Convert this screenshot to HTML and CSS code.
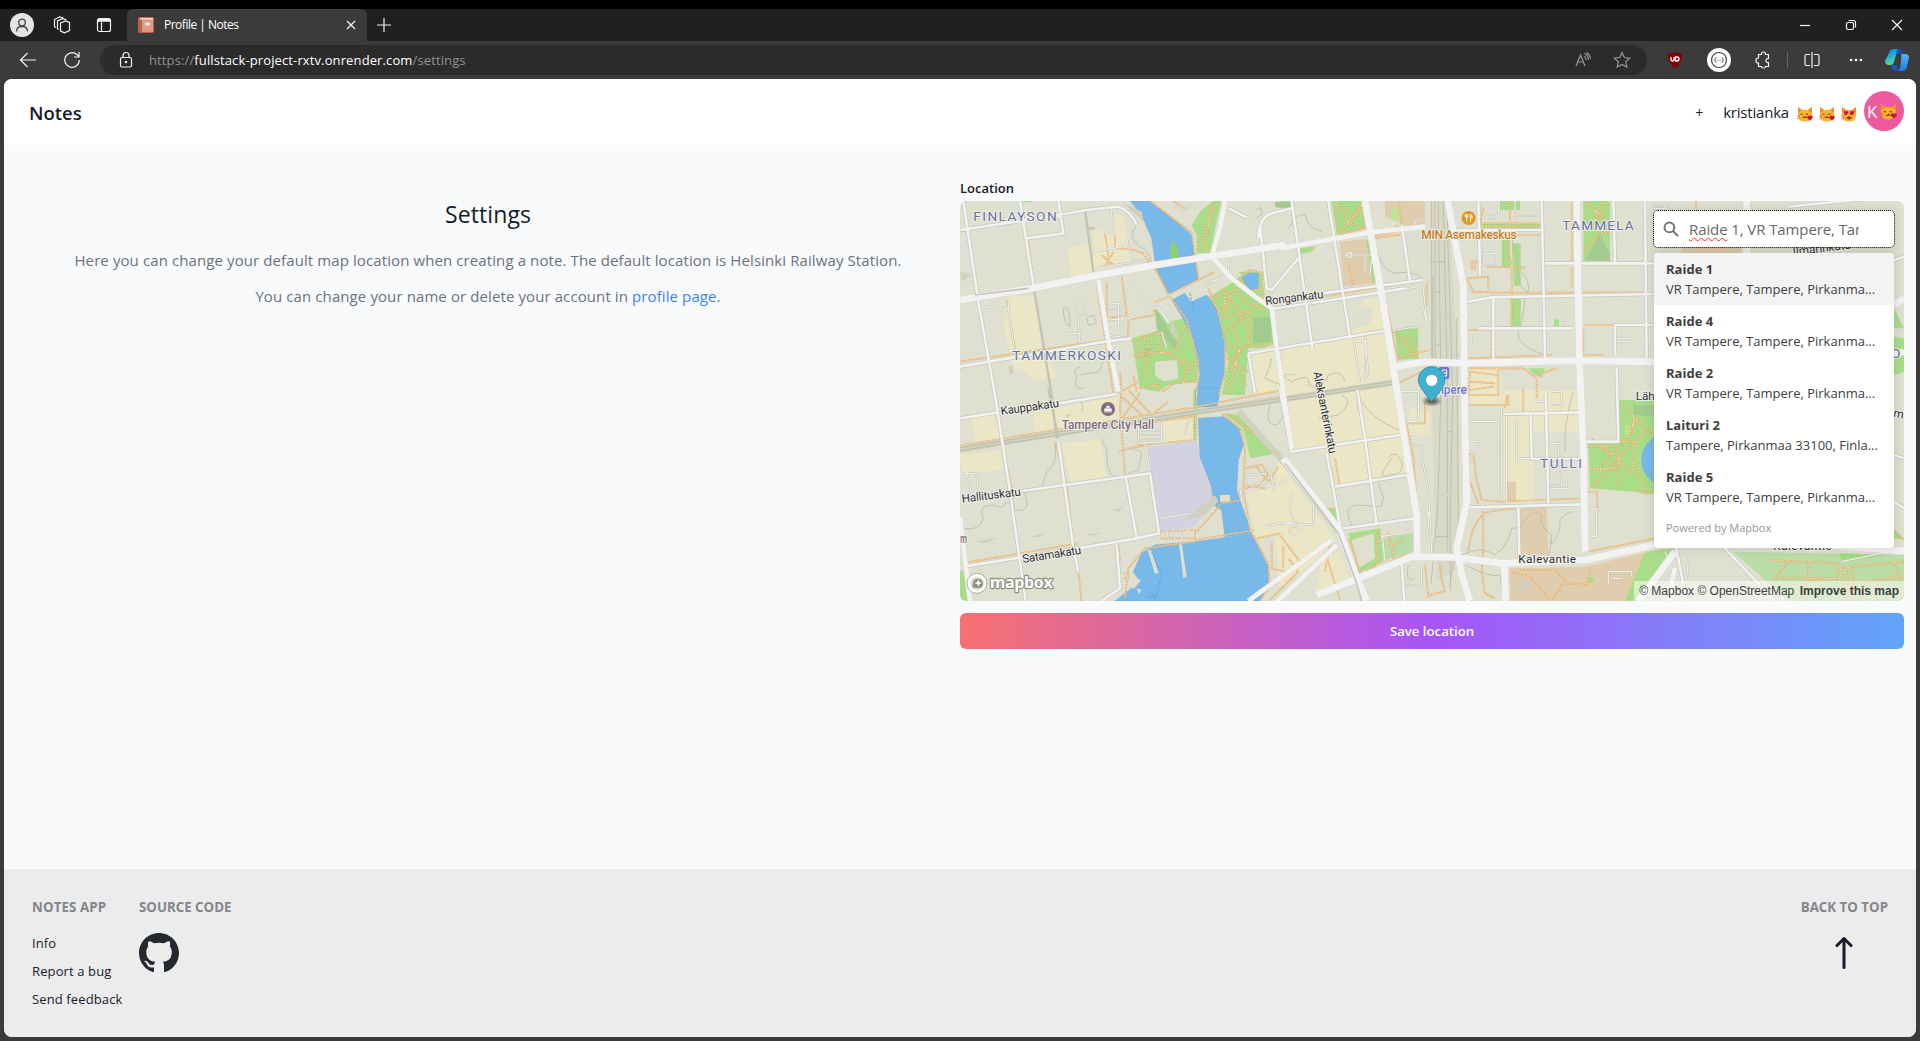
FILE: index.html
```html
<!DOCTYPE html>
<html lang="en">
<head>
<meta charset="utf-8">
<title>Profile | Notes</title>
<link rel="stylesheet" href="styles.css">
</head>
<body>
<svg class="defs" width="0" height="0" aria-hidden="true">
  <defs>
    <symbol id="cat" viewBox="0 0 16 16">
      <path d="M1 1l4 3h6l4-3v8.500q0 6-7 6t-7-6z" fill="#ffb02e"/>
      <path d="M1 1l4 3-4 3zM15 1l-4 3 4 3z" fill="#f58a25"/>
      <path d="M3.500 8.500q1-1 2 0M9 8.500q1-1 2 0M5.500 11.200q1.200 1 2.400 0q1.200 1 2.400 0M8 10v1.500" fill="none" stroke="#5d3a20" stroke-width="1"/>
      <path d="M0 10l3 .5M0 13l3-.8" stroke="#c96a12" stroke-width=".7"/>
    </symbol>
    <symbol id="heart" viewBox="0 0 10 10"><path d="M5 9.500L1 5.400Q-.4 2.600 2 1.200 4 .4 5 2.400 6 .4 8 1.200 10.400 2.600 9 5.400z" fill="#d0103c"/></symbol>
  </defs>
</svg>

<div class="tabstrip">
  <span class="profile"><svg width="14" height="14" viewBox="0 0 14 14"><circle cx="7" cy="4.500" r="3.300"/><path d="M1.500 13.500q0-5 5.500-5t5.500 5"/></svg></span>
  <svg class="chrome-icon workspaces" width="18" height="18" viewBox="0 0 18 18"><path d="M7.500 7l5-2 4 1.500v8l-5 2.300-4-1.800zM5.500 13.500L4.500 13V5l5-2.400 4 1.200M3 11.500l-1.500-.8V3.500l5-2.500 4 1"/></svg>
  <svg class="chrome-icon tabsmenu" width="16" height="16" viewBox="0 0 16 16"><rect x="1.500" y="1.500" width="13" height="13" rx="2"/><path d="M5.500 5v9" /><path d="M2 3.300h12" stroke-width="3"/></svg>
  <div class="tab">
    <svg width="16" height="16" viewBox="0 0 16 16"><rect width="16" height="16" rx="2" fill="#bf624b"/><path d="M4 1h11v14H4z" fill="#dc9b80"/><path d="M2 1h13v1.500H2z" fill="#e4dcd8"/><path d="M7 5.500h5v3H7z" fill="#eee5e1"/></svg>
    <span class="tab-title">Profile | Notes</span>
    <svg class="chrome-icon" width="10" height="10" viewBox="0 0 10 10"><path d="M1 1l8 8M9 1L1 9"/></svg>
  </div>
  <svg class="chrome-icon newtab" width="16" height="16" viewBox="0 0 16 16"><path d="M8 1v14M1 8h14"/></svg>
  <div class="window-buttons">
    <svg class="chrome-icon" width="12" height="12" viewBox="0 0 12 12"><path d="M1 6.500h10"/></svg>
    <svg class="chrome-icon" width="12" height="12" viewBox="0 0 12 12"><rect x="1.500" y="3.500" width="7" height="7" rx="1.500"/><path d="M3.500 1.500h5q2 0 2 2v5"/></svg>
    <svg class="chrome-icon" width="12" height="12" viewBox="0 0 12 12"><path d="M1 1l10 10M11 1L1 11"/></svg>
  </div>
</div>

<div class="toolbar">
  <svg class="chrome-icon back" width="18" height="16" viewBox="0 0 18 16"><path d="M17 8H1.500M8.500 1L1.500 8l7 7"/></svg>
  <svg class="chrome-icon reload" width="18" height="18" viewBox="0 0 18 18"><path d="M16.300 9A7.300 7.300 0 1 1 13.800 3.500L16 5.500M16 1v5h-5"/></svg>
  <div class="address">
    <svg class="chrome-icon" width="14" height="18" viewBox="0 0 14 18"><rect x="1.500" y="6.500" width="11" height="9.500" rx="1.500"/><path d="M4 6.500V4.500q0-3 3-3t3 3v2"/><circle cx="7" cy="11" r=".7" fill="#fff"/></svg>
    <span class="url">https://<b>fullstack-project-rxtv.onrender.com</b>/settings</span>
    <svg class="chrome-icon muted" width="16" height="16" viewBox="0 0 16 16"><path d="M1 14L5.500 3 10 14M2.800 10h5.500M9 4q2 1 2 4M9.500 1.500q4 1.800 3.800 6.500M11.500.5q4 2.500 3.800 6.500"/></svg>
    <svg class="chrome-icon muted star" width="18" height="18" viewBox="0 0 18 18"><path d="M9 1.500l2.300 5 5.400.6-4 3.700 1.100 5.400L9 13.500l-4.800 2.700 1.100-5.400-4-3.700 5.400-.6z"/></svg>
  </div>
  <svg class="ublock" width="16" height="16" viewBox="0 0 16 16"><path d="M8 0q3 1.500 7 1.500Q15.500 12 8 16 .5 12 1 1.500 5 1.500 8 0z" fill="#800000"/><path d="M4 5v2.500q0 1.500 1.500 1.500T7 7.500V5M8.500 5v4h1.500q2 0 2-2t-2-2z" fill="none" stroke="#fff" stroke-width="1.300"/></svg>
  <svg class="json" width="24" height="24" viewBox="0 0 24 24"><circle cx="12" cy="12" r="12" fill="#fff"/><circle cx="12" cy="12" r="7.500" fill="none" stroke="#444" stroke-width="1.200"/><path d="M9.500 9.500q-1.500 0-1.200 1.200Q8.500 12 7.500 12q1 0 .8 1.300-.3 1.200 1.200 1.200M14.500 9.500q1.500 0 1.200 1.200-.2 1.300.8 1.300-1 0-.8 1.300.3 1.200-1.200 1.200M10.200 12.300h.8M11.700 12.300h.8M13.200 12.300h.8" fill="none" stroke="#555" stroke-width=".9"/></svg>
  <svg class="chrome-icon puzzle" width="16" height="18" viewBox="0 0 16 18"><path d="M3.500 3.500h3q-.3-2.500 2-2.500t2 2.500h3v4q-2.500-.3-2.500 2t2.500 2v4h-3q.2 1.500-2 1.500t-2-1.500h-3v-3.500Q1 12.200 1 9.500T3.500 7z"/></svg>
  <i class="divider"></i>
  <svg class="chrome-icon split" width="16" height="16" viewBox="0 0 16 16"><path d="M6 2.500H2.500q-1.500 0-1.500 1.500v8q0 1.500 1.500 1.500H6M10 2.500h3.500Q15 2.500 15 4v8q0 1.500-1.500 1.500H10M8 0v16"/></svg>
  <svg class="more" width="14" height="4" viewBox="0 0 14 4" fill="#fff"><circle cx="2" cy="2" r="1.300"/><circle cx="7" cy="2" r="1.300"/><circle cx="12" cy="2" r="1.300"/></svg>
  <svg class="copilot" width="24" height="24" viewBox="0 0 24 24">
    <defs><linearGradient id="cp1" x2=".3" y2="1"><stop stop-color="#1686d8"/><stop offset=".55" stop-color="#20b6cf"/><stop offset="1" stop-color="#5ddc90"/></linearGradient><linearGradient id="cp2" x2="0" y2="1"><stop stop-color="#54b5ee"/><stop offset="1" stop-color="#2176e8"/></linearGradient></defs>
    <path d="M16.500 6H20q4 0 4 4l-2 9q-1 4-5 4h-6q4-1 4.500-5z" fill="url(#cp2)"/><path d="M6 17h6.500l-1 6Q8 23 7 20z" fill="#1a55cf"/>
    <path d="M4 5q1-4 5-4h6q-3 1-4 6l-2 7q-1 3-4 3H4q-4 0-4-4z" fill="url(#cp1)"/><path d="M12.500 1H15q2 0 3 5h-4q-2 0-3 3 0-6 1.500-8z" fill="#0e51b5"/>
  </svg>
</div>

<div class="page">
  <header class="header">
    <a class="brand">Notes</a>
    <div class="account">
      <span class="plus">+</span>
      <span class="username">kristianka</span>
      <span class="cats">
        <svg width="16" height="16" viewBox="0 0 16 16"><use href="#cat"/><use href="#heart" x="10" y="9" width="6" height="6"/></svg>
        <svg width="16" height="16" viewBox="0 0 16 16"><use href="#cat"/><use href="#heart" x="10" y="9" width="6" height="6"/></svg>
        <svg width="16" height="16" viewBox="0 0 16 16"><use href="#cat"/><use href="#heart" x="2.500" y="4.500" width="5" height="5"/><use href="#heart" x="8.500" y="4.500" width="5" height="5"/><path d="M5 11.500h6q-3 4-6 0z" fill="#d0103c"/></svg>
      </span>
      <span class="avatar">K<svg width="17" height="17" viewBox="0 0 16 16"><use href="#cat"/><use href="#heart" x="10" y="9" width="6" height="6"/></svg></span>
    </div>
  </header>

  <main class="main">
    <section class="intro">
      <h1>Settings</h1>
      <p class="p1">Here you can change your default map location when creating a note. The default location is Helsinki Railway Station.</p>
      <p class="p2">You can change your name or delete your account in <a>profile page.</a></p>
    </section>

    <section class="location">
      <label>Location</label>
      <div class="map">
        <svg class="map-canvas" width="944" height="400" viewBox="15 78 2832 1200">
          <rect x="15" y="78" width="2832" height="1200" fill="#dfe0d0"/>
          <g fill="#ebe6c6">
            <path d="M337 215l68-10 10 100-67 3zM415 160l65 25v-65h25l22 145-112 25zM165 365h75l25 140 40 105-65 5-40-30-25-5-30-130zM50 725l70-5 15 75-75 5zM235 710l255-45 10 85-260 30zM15 840l120-15 10 60-125 10zM320 805l115-10 20 112-110 18zM620 740l90-15 5 70-85 10zM890 540l70-10 25 120-90 5z"/>
            <path d="M875 955l90-20v-85l175 240-60 70-105 80-15-160-55 15zM985 520l210-45v-25l30-75 45-10 20 105 25 170 40 260-205 35-30-105h-110l-35-190zM1645 645h225v125h-135v215h-90zM1545 580h90l5 80 60 40-155-15zM1355 780h70v-70l-60-10zM1100 1150l50-20 40 90-110 40z"/>
          </g>
          <g fill="#dfcdae"><path d="M1290 78h120v72l-70 5-10-15-40-15zM1155 200l80-8 27 133-97 10zM1695 1000l80-5 5 145h-85zM1665 1180l225-5 190-45-60 148h-355zM1655 920h28v58h-28zM2180 180h180v65h-180z"/></g>
          <g fill="#a9dd8a">
            <path d="M735 110l40-32h25l-15 62-20 95h-40v-55l-15-30zM1130 78h90l12 82-87 18zM530 490l70-20 15-10-15-60 40 40 50-10 40 130-5 60-85 10-30 20-55-10zM755 370l65-40 40-30-10-10h70l10 75-30 5 50 30 10 100-30 20h-50l-10 140h-70l20-100-30-140zM805 715l45 5 115 115-80 15-20-90zM715 645h10v150h-10zM1320 465l70-5v90l-60 5zM1233 195h12l17 125-10 5zM1640 195h25v80h-25zM1670 205h27v128h-20zM1667 370h30v85h-30zM1580 145h175v15h-175zM1635 78h60v27h-60zM1797 405h15v48h-15zM1885 78h80v180h-80zM960 90l50-12h-30zM1035 220l48-6-10 15-35 8zM200 78h30v4h-30z"/>
            <path d="M1900 805h90v-130h107v280h-17l-175-15zM1180 1075l95-15 10 100-75 35zM1105 1005l35-5 5 40zM2010 1278l60-148 90-12-100 160zM2817 400l30 60h-30zM2817 485l30 5v100l-30 10zM2817 1065l30 30-30-5zM15 1190l10-5 13 93H15zM1895 1208h22v16h-22zM1720 580h50l-10 28-25-10z"/>
          </g>
          <path d="M2335 1130l512 10v138h-347zM1285 1090l90-15 3 55-88 25z" fill="#bbdba7"/>
          <path d="M2655 1135l145 5-140 20z" fill="#a1dc81"/>
          <path d="M1190 1095l65-20 5 75-50 30zM600 560l65-5 5 55-45 10-25-20z" fill="#dfe0d0"/>
          <path d="M895 430l50-5 5 75-55 5zM565 520h22v25h-22zM1890 255l45-80 30 65v18zM2035 690h62v32h-62zM600 400l70 110-15 10-50-60zM960 80h50v25l-50-10z" fill="#a3cb8f"/>
          <path d="M1310 98h20v38h-20zM2010 750h15v28h-15z" fill="#bfe591"/>
          <path d="M1340 175l90-10 20 150-80 30zM1790 340l70 10-10 90-70-10zM1205 400l50-5-10 50-55 20z" fill="#dddfcf"/>
          <path d="M578 817l147-22 10 50 35 90 5 55-60 65-100 15z" fill="#d2d2e0"/>
          <g fill="#79b9ea" stroke="#70a8db" stroke-width="1.500">
            <path d="M525 78h60l55 42 70 60 8 60 12 75-90 45-35-70-15-100-30-70zM650 375l40-20 20 25 45-20 35 50 22 90-4 90-22 105h-66l15-100-20-100-25-55z"/>
            <path d="M730 730l75-5 45 30 15 55-15 45-5 90 15 45 30 85-80 10-10-80-25-15-5-55-35-90zM560 1135l40-25 120-10 170-23 50 98v50l-25 53H480l75-58-20-30z"/>
            <path d="M860 310l20-15h30v45l-25 5zM722 640h70l-12 52-58 5z"/><circle cx="2140" cy="855" r="80"/>
          </g>
          <path d="M655 193l14 30v30l-20 7-5-30z" fill="#91d070"/>
          <path d="M690 355l45-20 10 20-35 25zM795 960h30v20h-30zM578 1125l10-4 22 72-10 4zM672 1106l8-2 15 102-10 3zM530 1195l28 22-25 28zM545 1240l15 5-8 12z" fill="#dfe0d0"/>
          <path d="M585 1120l22 50 14 25-18 75M575 1268l35-10M590 1255l12 22M705 355l14 60" stroke="#5aa0e6" stroke-width="3" fill="none" stroke-dasharray="8 4"/>

          <!-- contours -->
          <g fill="none" stroke="#bcbcac" stroke-width="2.500">
            <path d="M545 150q-30 40 5 60t40 50M375 575q-25 10-10 30l-5 25q15 20 30 5M375 600l55-10 15-30M25 1060q50 10 60-30-20-40 30-40 30 15 35-5 20-10 30 20 50 10 30-50l30-10M380 710q10-20-10-40M300 800q10 70-25 90l-12 40M450 790q-20 10 5 30 0 60 10 70 0 20 45 15M490 830q50-20 70 5l-10 50-30 10M945 690q-20 60 20 60 40-40 15-60M1260 210q20 80 60 85 60-10 80 15M1000 160q30-50 50-40 10 40 50 50M1020 600q-60-10-10 20 60-30 50 10 40 20 60-30 40-20 50 20M1290 430q20 60 40 40M1160 660q40 20-10 60l-60 10M1220 680q30 50 110 85M1310 850q-50 70-10 50 50 0 40-40-20-40-40-10M1190 1050q-30-60 20-60l70 5 5-30-15-40M1520 1140q60-30 100 0 40-30 50-80 20 0 25-10M1700 1050q40-60 60-30-10 30 30 60-10 60 25-20-10-40 40-50M1780 1150l10-60M1710 370q-10 90-20 100-10 40 80 70M1665 160q10 60 20 80 0 110 35 110M1855 650q-30 100-25 180M900 110q20-30 20 10l-20 10M325 400q20-15 20 55-20-5-20-55M395 430l20-10 10 25-25 5zM1700 290q25 30 20 60M950 550q-5 30-20 60l50 20M1530 1170q80 40 105 30l10 70M1360 1170q-10 60 20 40"/>
          </g>
          <g fill="#cfd0bf"><path d="M160 575l15-5v25l-12 5zM395 1078l45-5-30 10zM470 1005l35-8-15 12zM60 1100l65-12-30 16zM225 1085l55-13-30 15zM500 80l60 30 20 90-15-60zM650 430l25 70-30-30zM15 290l35 10-30 20zM720 1010l60-50 10 20-40 40-70 15zM1680 1230l50-15v15l-40 10zM330 720l25-5-20 15z"/></g>

          <!-- railway yard -->
          <path d="M1425 78h55l30 500 5 600-70 40-15-540z" fill="#d8d9c8"/>
          <g fill="none" stroke="#bfc0ac" stroke-width="3"><path d="M1430 78v500l5 80M1440 78v560M1450 78l8 570-10 350-20 230M1465 78l12 560v490M1475 78l18 570-8 420 2 180M1433 300v300M1505 430l5 620-25 180M1425 260h48M1440 350h14M1470 420h14M1440 510h14M1478 770h14M1440 1085h40"/></g>

          <!-- footpaths: orange edge with a pale dashed core -->
          <g class="path-edge"><use href="#footpaths"/></g>
          <g class="path-core">
            <g id="footpaths">
              <path d="M585 78l125 95 10 70 12 72-92 45M655 78l40 25M785 85l-60 140M770 78l-20 155M560 230l25 30 20 30 40 75 50 70 35 125-5 100M640 360l90-45 50-25M640 365l-40 15M590 265l-170 30M220 195l15 130M155 375l25 150M15 560l440-65M425 325l50 330M455 320v110M500 305l15 110M450 175l15 100M480 180v40l60 5 30 15 10 25M440 240l35 30M475 230l-25 45M465 428l55-8M520 430v60M520 435l75-15 5-20"/>
              <path d="M530 500l80-30 25 50M540 520l30 40M570 490l-5 40 90 5M590 490v30M530 545l55-10-20 75M550 640l60-10 15 20 30-25 70-5M610 500l5 30 40 20 70 20M690 450l-30 80M665 545l30 45 30-20M695 590l-10 35M535 600l10 50M490 655l60-35"/>
              <path d="M760 340l30 70 20 90v100l-20 60M765 370l80-25 20-30M790 415l35-55 60 120M825 360l-10 60-10-80M845 345l30 40 60 20M855 310l30-25 40 10-5 45-40 10-25-20zM795 430l85-20M810 470l60-50M835 440l20 100-30 50M890 400l-10 110-45 30M885 515l70-10M810 550l70 40M830 540l45 90M845 560l-30 100M855 530l-30-20M920 340l5 50"/>
              <path d="M1145 78l5 90M1220 78l10 82-80 20M1140 90l60 40 25-50M1155 175l70-95M1175 140l50 20M1170 95l10 60M1255 185l90-20M1255 190l85-12M1180 270l15 60M1105 365l300-50M1110 375l200-25M1335 85l5 60M1330 150l-20 20M1320 475l70 75M1325 555l30-15 70-15M1345 500q20-30 35 10-10 20-25 5M1415 320v70M1290 375l40 180M1330 625l100-50"/>
              <path d="M1580 145h180M1580 155h175M1665 78v70l-5 10v60l10 60M1585 95l-10 60M1590 275l120 2M1540 310l60-5v40M1535 310l20 40 70 3h450M1560 255v25h-10v-20h20M1540 465h70v90M1670 275v180M1680 180h75M1850 80v260M1890 80l70 60M1960 85l-45 50 25-55M1965 175h-30l-50 55M1920 105l40 60M1885 450h90M1885 460v80h60M1975 78v30M1540 550l250-10M2223 78v25"/>
              <path d="M1540 580h90v80h-90l5-70 80 10M1540 620l80 5M1545 645l70-10M1625 580h80l40 30v60M1745 600l60-20M1540 690h120v-30M1655 660l-5 40M1705 640v70M1555 835l10 80 15 60 60 5 240-10M1545 830l-5 80 30 75M1410 680v65h-50M1355 745l20 100 20 280M1540 1130q10-100 60-120l80-10M1585 1005v120l-5 60 10 70 30 15M1665 1190l60 15 60 70M1690 1185h110l30 30-40 60M1830 1225l70 5 5-50M1897 950h30v60M1905 880h80M1895 815h80M1910 935l80-70"/>
              <path d="M15 830l700-120 260-45M15 812l700-115 260-50M495 590l5 50-5 60 15 200M500 665l60 55M555 655l-65 90M520 645l70 75 50-40M515 820l70-10M550 760v50l170-15M560 745l155-20M725 650l-5 130M145 820l25 120M335 925l20 200M300 800l35 130M800 715l60 50 10 60-5 120 20 120 55 100 5 70-25 35M820 715l75 60 80 60M870 880l50-10 20 30-30 30-45 10M900 870l40 50 30-45M870 930l60 10M900 1065l-180 30M860 975l-60 10-30 35-45 50M720 1100l-150 20-50 60-10 90M505 1195h15v15h-15M20 1165l350-60M370 1190l10 88M490 1110l5 50M610 1070l110-5v35M615 1090h100"/>
              <path d="M905 1090l70-15M975 1080l60 80M950 1100v80l40 10-30 40M985 1110v70M1000 1150l30 40-90 90M1180 1090l40 110 50-35-5-40 10-60M1260 1100h25M1300 1070l20 100M1300 1115l50-20M1115 1145l40 130M1125 1110l-15 80M1410 1165l10 100 30-15M1455 1165l5 50 10 35-50 10M1350 1140l-130 60M1140 850l15 90M1145 1000h-35"/>
              <path d="M2000 680l40 50-20 60-80 80M1990 800h50l-10 100-40-50-80-60M1905 880l50 5 30-30 90-90M1992 830v110M2035 730l60 50M2060 730l-40 30M2035 720v60M2030 860l50 90M1935 820l40 20M2045 940l20 15h30M2440 1155l210 10-5 60M2560 1160v50M2500 1160l-40 50h180M2655 1180l190-20M2660 1180l10 98M2675 1180l10 98M2690 1180l10 98M2700 1225l145-20M2560 1210l-20 68M2640 1210l-80 10M2820 1160l25 118M2730 1220l-10 58M2770 1220l-5 58M2817 1065l30 30M2100 1090l-200 40"/>
            </g>
          </g>

          <!-- service lanes -->
          <g class="lane-edge"><use href="#lanes"/></g>
          <g class="lane-core">
            <g id="lanes">
              <path d="M410 230l100-15M420 280l155-25M470 95v35M520 220q-10-40 20-40M75 410l90-10M160 375v30l20 130M360 375l10 60 5 70M385 375l5 45h-30M335 475h35M455 435l70-5 80-35 35 50M530 325l60 60M545 380l30-20M470 385h20v70M460 405h40l5 65M455 480l70 10M610 395l35 50M620 470l15 50M750 330l50-20M660 95l25 15 35-25M820 250v40l-50 30M880 530l75-15M25 895h40l5 60M35 890l15 70"/>
              <path d="M1165 240h100l-20-50M1230 245v45M1250 250l-5 50M1380 155v-20h20M1300 350l90-15M1320 340v10M1395 340l20 110-90 15M1405 340l10 100M1175 240a8 8 0 1 0 16 0 8 8 0 1 0-16 0M1195 490l20 130M1230 480l10 130M1200 500h30v120M1580 210v65M1620 210v60h-45M1585 235h45M1630 80v40M1595 120h25v12h-25zM1680 78v45h70M1550 500v-15M1590 515h25M1830 460v-30M1840 265a10 8 0 1 0 2-3M1540 740h90M1540 800h30q10 25-30 30M1640 700v260l-10 15M1655 720v260M1630 740v210M1345 650h45v90h-35M1370 810h25l30 170-10 130M1420 970l-20 40M1385 1030l40-20 5 120M1440 960h60M1685 730v140M1740 680h30M1690 850h60M1790 650h30v40h-30M1785 805h25v60h-25M1815 830v100h-30M1785 940h50v-20M1910 1000h15v85h-20M1350 1230h35M1400 1170v70M1075 990v60l-80-5M1015 955q-20 40 0 80M1005 1060a15 12 0 1 0 1-1M1280 1085l95-15M1280 1060l10 100"/>
              <path d="M550 745v60l90-5M560 768h65M560 780h60M560 792h60M620 745v50M700 730l-10 50M615 1030l90-15M635 1065l5 30M655 1065l5 30M675 1062l5 30M695 1060l5 30M570 800l15 90M860 980l-5-40M890 930l50-10M935 1050l90-10M945 880l10 60 40-30M870 900l60-5M1960 1230v-40h70v12M1970 1210h30M2095 90h40v25M2090 100h40l-5-20M1985 490h45M1985 500h30M2160 1130l-50 150M2130 1130l60 148M2200 1150l-10 128M2660 1160l187-40M2817 980l30 15"/>
            </g>
          </g>

          <!-- streets: casing then surface -->
          <g class="casing"><use href="#streets"/></g>
          <g class="casing wide"><use href="#avenues"/></g>
          <g class="rail-street"><path d="M15 822l285-45 420-65 255-38 345-52"/><path d="M850 708l160 180 140 180"/></g>
          <g class="rail-line"><path d="M15 818l285-45 420-65 255-38 345-52M15 827l285-45 420-65 255-38 345-52"/></g>
          <g class="narrow"><path d="M390 105l25 185M235 330l55 330 15 130M280 640l30 150M1207 645l5 60M400 160h20"/></g>
          <g class="surface">
            <g id="streets">
              <path d="M25 78l45 302 50 280 45 290 47 328M195 78l40 252M15 165l235-35 145-25 95-10q35 10 55 55M15 575l435-75 80-10M310 78l15 97-110 15M15 730l115-18M310 685l175-28M310 800l45 320 15 70M20 975l180-27 130-18 255-35 27 180-67 15-175 30-345 55M512 905l33 185M485 1110l10 130-55 38"/>
              <path d="M1010 78l20 142 25 180 17 120M1120 78l65 412M950 402l180-27 145-23 75-12M1100 355l305-40M1340 150l25 168M880 535l405-67M910 190q0-60 40-75l60-15M915 150l20 190 15 5 80-95M820 100l55 27M1570 78l5 222M1505 165h260M1760 78l10 472M1540 380l70-13 487-10M1615 370v185M1570 460h285M1770 265h327M1975 78l5 185M2070 78l5 482M1980 540v-90h117M1985 580l5 220h-100"/>
              <path d="M1645 717l235-5M1727 717l3 135h150M1772 655l8 330M1545 997l340-9M1690 998l3 152M1010 830l325-50M1140 935l215-35M1165 1060l215-30M1207 645l23 145 35 260M1115 835l40 215M975 645l35 185M1340 1165l8 113M880 535l20 120M2300 1110l160 168M2160 1100l35 178M2817 840l30 10M2817 255l30-10M2500 95l300-30M2817 980l30 20"/>
            </g>
            <g id="avenues">
              <path class="w14" d="M430 315l30 185 30 150M15 1025l30 253M1410 155l-165 17-270 48M810 78l-15 82-25 85 60 65 70 55 50 35 15 118 45 302M1130 1095l-250 183M1145 1110l-200 190M2140 1278l20-100"/>
              <path class="w22" d="M15 375l215-35 200-40 170-30 160-25 230-35M985 850l165 210 60 160 25 58M1230 78l50 282 12 70 33 210 20 130 40 250 2 125M1478 78l47 252 3 310 7 345-30 130 15 85 25 78M1085 1260l285-115 130 2 140 18 250-10 207-45M1320 575l90-15 120 5 320-8 247 3M1865 78l8 472 12 280 5 300M1648 1170l4 108M2160 1130l-110 148M2375 78v170M2600 1110l247 18M2817 540l30-10M2817 390l30-20"/>
            </g>
          </g>
          <path d="M990 865l160 210 55 150 15 53M60 360l160-20" fill="none" stroke="#c5c6b6" stroke-width="5"/>

          <!-- labels -->
          <g class="district">
            <text x="55" y="138" textLength="250">FINLAYSON</text>
            <text x="172" y="556" textLength="326">TAMMERKOSKI</text>
            <text x="1822" y="165" textLength="214">TAMMELA</text>
            <text x="1755" y="878" textLength="126">TULLI</text>
            <text x="2808" y="550">O</text>
          </g>
          <g class="street-name">
            <text x="932" y="390" textLength="176" transform="rotate(-7 932 390)">Rongankatu</text>
            <text x="1075" y="592" textLength="250" transform="rotate(79 1075 592)">Aleksanterinkatu</text>
            <text x="139" y="720" textLength="176" transform="rotate(-8 139 720)">Kauppakatu</text>
            <text x="22" y="983" textLength="178" transform="rotate(-7 22 983)">Hallituskatu</text>
            <text x="204" y="1164" textLength="178" transform="rotate(-9 204 1164)">Satamakatu</text>
            <text x="1690" y="1164" textLength="173">Kalevantie</text>
            <text x="2455" y="1124" textLength="175">Kalevantie</text>
            <text x="2042" y="675">Lähde</text>
            <text x="2515" y="242" transform="rotate(-7 2515 242)">Ilmarinkatu</text>
            <text x="2814" y="725" transform="rotate(10 2814 725)">m</text>
          </g>
          <g class="poi">
            <text x="320" y="763" textLength="277" fill="#806a7c">Tampere City Hall</text>
            <text x="16" y="1103" textLength="20" lengthAdjust="spacingAndGlyphs" fill="#806a7c">m</text>
            <text x="1399" y="191" textLength="286" fill="#c47c24">MIN Asemakeskus</text>
            <text x="1398" y="656" textLength="138" fill="#6c78cc">Tampere</text>
          </g>
          <circle cx="459" cy="702" r="21" fill="#806a7c"/><path d="M447 711h24M449 701h20v7h-20zM453 697q6-8 12 0zM459 688v4" stroke="#fff" stroke-width="2" fill="#fff"/>
          <circle cx="1541" cy="129" r="21" fill="#e59420"/><path d="M1535 118v22M1531 118v8h8v-8M1547 140v-22q6 2 4 12" stroke="#fff" stroke-width="3" fill="none"/>
          <rect x="1450" y="576" width="33" height="36" rx="6" fill="#6c78d0"/><path d="M1461 585h14v17h-14zM1461 594h14M1463 607l3-4M1473 607l-3-4" stroke="#fff" stroke-width="3" fill="none"/>
          <defs><radialGradient id="pinshadow"><stop stop-color="#000" stop-opacity=".75"/><stop offset="1" stop-color="#000" stop-opacity="0"/></radialGradient></defs>
          <ellipse cx="1430" cy="678" rx="32" ry="17" fill="url(#pinshadow)"/>
          <path d="M1430 680q-12-13-24-30-16-22-16-35a40 40 0 0 1 80 0q0 13-16 35-12 17-24 30z" fill="#3fb1ce" stroke="#3594ad" stroke-width="3"/><circle cx="1430" cy="616" r="17" fill="#fff"/>

          <!-- mapbox wordmark -->
          <circle cx="66" cy="1225" r="25" fill="none" stroke="#fff" stroke-width="9"/><circle cx="66" cy="1225" r="30" fill="none" stroke="#8e8f84" stroke-width="2"/>
          <path d="M53 1238q-2-27 14-27t17 14-14 14z" fill="#909288"/><path d="M70 1213l3 8 8 3-8 3-3 8-3-8-8-3 8-3z" fill="#fff"/>
          <text class="wordmark" x="104" y="1238" textLength="189">mapbox</text>
        </svg>

        <div class="geocoder">
          <div class="search">
            <svg width="18" height="18" viewBox="0 0 18 18"><path d="M7.400 2.500a4.900 4.900 0 1 0 0 9.800 4.900 4.900 0 0 0 0-9.800zM11 11l5 5" fill="none" stroke="#757575" stroke-width="2"/></svg>
            <span class="query"><u>Raide</u> 1, VR Tampere, Tampere</span>
          </div>
          <ul class="suggestions">
            <li class="active"><b>Raide 1</b><span>VR Tampere, Tampere, Pirkanma...</span></li>
            <li><b>Raide 4</b><span>VR Tampere, Tampere, Pirkanma...</span></li>
            <li><b>Raide 2</b><span>VR Tampere, Tampere, Pirkanma...</span></li>
            <li><b>Laituri 2</b><span>Tampere, Pirkanmaa 33100, Finla...</span></li>
            <li><b>Raide 5</b><span>VR Tampere, Tampere, Pirkanma...</span></li>
            <li class="powered">Powered by Mapbox</li>
          </ul>
        </div>
        <div class="attribution"><span>© Mapbox</span> <span>© OpenStreetMap</span> <b>Improve this map</b></div>
      </div>
      <button class="save">Save location</button>
    </section>
  </main>

  <footer class="footer">
    <div class="col app"><h2>NOTES APP</h2><a>Info</a><a>Report a bug</a><a>Send feedback</a></div>
    <div class="col source"><h2>SOURCE CODE</h2>
      <svg width="40" height="40" viewBox="0 0 16 16" fill="#24292f"><path d="M8 0C3.580 0 0 3.580 0 8c0 3.540 2.290 6.530 5.470 7.590.4.070.55-.17.55-.38 0-.19-.01-.82-.01-1.490-2.010.37-2.530-.49-2.690-.94-.09-.23-.48-.94-.82-1.130-.28-.15-.68-.52-.01-.53.63-.01 1.080.58 1.230.82.72 1.210 1.870.87 2.330.66.07-.52.28-.87.51-1.070-1.780-.2-3.640-.89-3.640-3.950 0-.87.31-1.590.82-2.150-.08-.2-.36-1.020.08-2.120 0 0 .67-.21 2.200.82.640-.18 1.320-.27 2-.27s1.360.09 2 .27c1.530-1.040 2.200-.82 2.200-.82.44 1.100.16 1.920.08 2.120.51.560.82 1.270.82 2.150 0 3.070-1.870 3.750-3.650 3.950.29.25.54.73.54 1.480 0 1.070-.01 1.930-.01 2.200 0 .21.15.46.55.38A8.010 8.010 0 0 0 16 8c0-4.420-3.580-8-8-8z"/></svg>
    </div>
    <div class="col top"><h2>BACK TO TOP</h2>
      <svg width="18" height="34" viewBox="0 0 18 34"><path d="M9 31.500V3M2 9.500L9 2.500l7 7" fill="none" stroke="#171a2b" stroke-width="3" stroke-linecap="round" stroke-linejoin="round"/></svg>
    </div>
  </footer>
</div>
</body>
</html>
```
FILE: styles.css
```css
* { box-sizing: border-box; }
html { background: #000; }
body {
  margin: 0;
  width: 1920px;
  height: 1041px;
  padding-top: 9px;
  overflow: hidden;
  background: linear-gradient(#000 9px, #3b3b3b 9px);
  font-family: "Open Sans", "Noto Sans", sans-serif;
  color: #171a2b;
}
.defs { position: absolute; }
svg { display: block; flex: none; }
h1, h2, p, ul { margin: 0; padding: 0; font-weight: 400; }

/* browser frame */
.chrome-icon { fill: none; stroke: #f2f2f2; stroke-width: 1.2; }
.chrome-icon.muted { stroke: #9a9a9a; }
.tabstrip { display: flex; align-items: center; height: 32px; background: #202020; padding-left: 10px; }
.profile { width: 24px; height: 24px; border-radius: 50%; background: #e4e4e4; display: grid; place-items: center; }
.profile svg { fill: none; stroke: #444; stroke-width: 1.3; }
.workspaces { margin-left: 19px; }
.tabsmenu { margin-left: 25px; }
.tab { display: flex; align-items: center; width: 240px; height: 32px; margin-left: 15px; padding: 0 11px; background: #3b3b3b; border-radius: 6px 6px 0 0; }
.tab-title { flex: 1; margin: 0 0 2px 10px; color: #fff; font-size: 12px; letter-spacing: -.5px; white-space: nowrap; }
.newtab { margin-left: 9px; }
.window-buttons { display: flex; gap: 34px; margin-left: auto; padding-right: 17px; }
.toolbar { display: flex; align-items: center; height: 38px; background: #3b3b3b; padding-left: 19px; }
.reload { margin-left: 26px; }
.address { display: flex; align-items: center; width: 1547px; height: 30px; margin-left: 19px; padding: 0 16px 0 19px; border-radius: 15px; background: #2b2b2b; }
.url { flex: 1; margin-left: 16px; font-size: 13px; letter-spacing: .12px; color: #929292; white-space: nowrap; }
.url b { font-weight: 400; color: #fff; }
.star { margin-left: 22px; }
.ublock { margin-left: 20px; }
.json { margin-left: 24px; }
.puzzle { margin-left: 24px; }
.divider { width: 1px; height: 16px; margin-left: 16px; background: #666; }
.split { margin-left: 16px; }
.more { margin-left: 29px; }
.copilot { margin-left: 22px; }

/* page */
.page { display: flex; flex-direction: column; width: 1912px; height: 958px; margin-left: 4px; background: #f9fafc; border-radius: 8px; overflow: hidden; }
.header { display: flex; align-items: center; justify-content: space-between; height: 66px; padding: 0 12px 0 25px; background: #fff; }
.brand { font-size: 18.5px; font-weight: 600; }
.account { display: flex; align-items: center; height: 64px; }
.plus { font-size: 14px; margin-right: 20px; }
.username { font-size: 15px; letter-spacing: -.2px; }
.cats { display: flex; gap: 6px; margin: 3px 7px 0 8px; }
.avatar { display: flex; align-items: center; width: 40px; height: 40px; padding-left: 3px; border-radius: 50%; background: #ee5a9f; color: #fff; font-size: 17px; gap: 3px; margin-bottom: 2px; }

.main { display: grid; grid-template-columns: 944px 944px; height: 724px; padding: 0 12px; }
.intro { padding-top: 51px; text-align: center; color: #6b7280; font-size: 15px; letter-spacing: .1px; line-height: 24px; }
.intro h1 { font-size: 23px; line-height: 36px; color: #171a2b; }
.intro p { margin-top: 12px; white-space: nowrap; }
.intro .p1 { margin-top: 16px; }
.intro a { color: #3b82f6; }
.location { padding-top: 34px; }
.location label { display: block; height: 22px; line-height: 18px; font-size: 13px; font-weight: 600; }

.map { position: relative; height: 400px; border-radius: 6px; overflow: hidden; }
.path-edge { fill: none; stroke: #e6a556; stroke-width: 5; opacity: .8; }
.path-core { fill: none; stroke: #f6efe0; stroke-width: 2; stroke-dasharray: 7 3; }
.path-edge use { stroke-dasharray: none; }
.lane-edge { fill: none; stroke: #bcbdb0; stroke-width: 6; }
.lane-core { fill: none; stroke: #f0f0ec; stroke-width: 3.5; }
.casing { fill: none; stroke: #c5c6ba; stroke-width: 12; }
.surface { fill: none; stroke: #f2f2f2; stroke-width: 8; stroke-linejoin: round; }
.w14 { stroke-width: 14px; }
.w22 { stroke-width: 21px; }
.rail-street { fill: none; stroke: #d0d1bf; stroke-width: 18; }
.rail-line { fill: none; stroke: #bcbda8; stroke-width: 3; }
.narrow { fill: none; stroke: #c2c2b7; stroke-width: 7; }
.map text { font-family: Roboto, "Open Sans", sans-serif; paint-order: stroke; stroke: #f0f0e8; stroke-width: 6px; stroke-linejoin: round; }
.district text { font-size: 41px; fill: #6871a0; }
.street-name text { font-size: 35px; fill: #303036; }
.poi text { font-size: 36px; font-weight: 500; }
.map .wordmark { font-family: "Open Sans", sans-serif; font-size: 48px; font-weight: 700; fill: #fff; stroke: #8e8f84; stroke-width: 7px; }

.geocoder { position: absolute; top: 10px; right: 10px; width: 240px; }
.search { display: flex; align-items: center; height: 36px; padding: 0 35px 0 8px; background: #fff; border-radius: 4px; outline: 1px dotted #111; box-shadow: 0 0 10px 2px rgba(0,0,0,.1); }
.query { flex: 1; margin-left: 9px; overflow: hidden; white-space: nowrap; font-size: 15px; letter-spacing: -.1px; line-height: 26px; color: #686868; }
.query u { text-decoration: underline wavy #f22 1.3px; text-underline-offset: 2px; text-decoration-skip-ink: none; }
.suggestions { margin-top: 6px; list-style: none; height: 295px; background: #fff; border-radius: 4px; overflow: hidden; box-shadow: 0 0 10px 2px rgba(0,0,0,.1); color: #404040; font-size: 13px; line-height: 20px; white-space: nowrap; }
.suggestions li { height: 52px; padding: 6px 12px; }
.suggestions b, .suggestions span { display: block; }
.suggestions .active { background: #f3f3f3; }
.suggestions .powered { height: 35px; padding-top: 5px; font-size: 11px; color: #969696; }
.attribution { position: absolute; right: 0; bottom: 0; height: 20px; padding: 0 5px; background: rgba(255,255,255,.5); font: 12px/20px "Liberation Sans", sans-serif; color: #404040; white-space: nowrap; }
.attribution b { margin-left: 2px; }
.save { display: block; width: 944px; height: 36px; margin-top: 12px; padding-bottom: 2px; border: 0; border-radius: 6px; background: linear-gradient(90deg, #f87171, #a855f7 50%, #60a5fa); color: #fff; font: 600 13.2px "Open Sans", sans-serif; }

.footer { display: flex; height: 168px; padding: 28px 28px 0; background: #ececec; white-space: nowrap; }
.footer h2 { font-size: 13.3px; line-height: 20px; font-weight: 700; color: #85858c; }
.app { width: 107px; font-size: 13px; letter-spacing: .12px; line-height: 20px; }
.app h2 { margin-bottom: 16px; }
.app a { display: block; margin-bottom: 8px; }
.source svg { margin-top: 16px; }
.top { margin-left: auto; display: flex; flex-direction: column; align-items: center; }
.top svg { margin-top: 19px; }
```
